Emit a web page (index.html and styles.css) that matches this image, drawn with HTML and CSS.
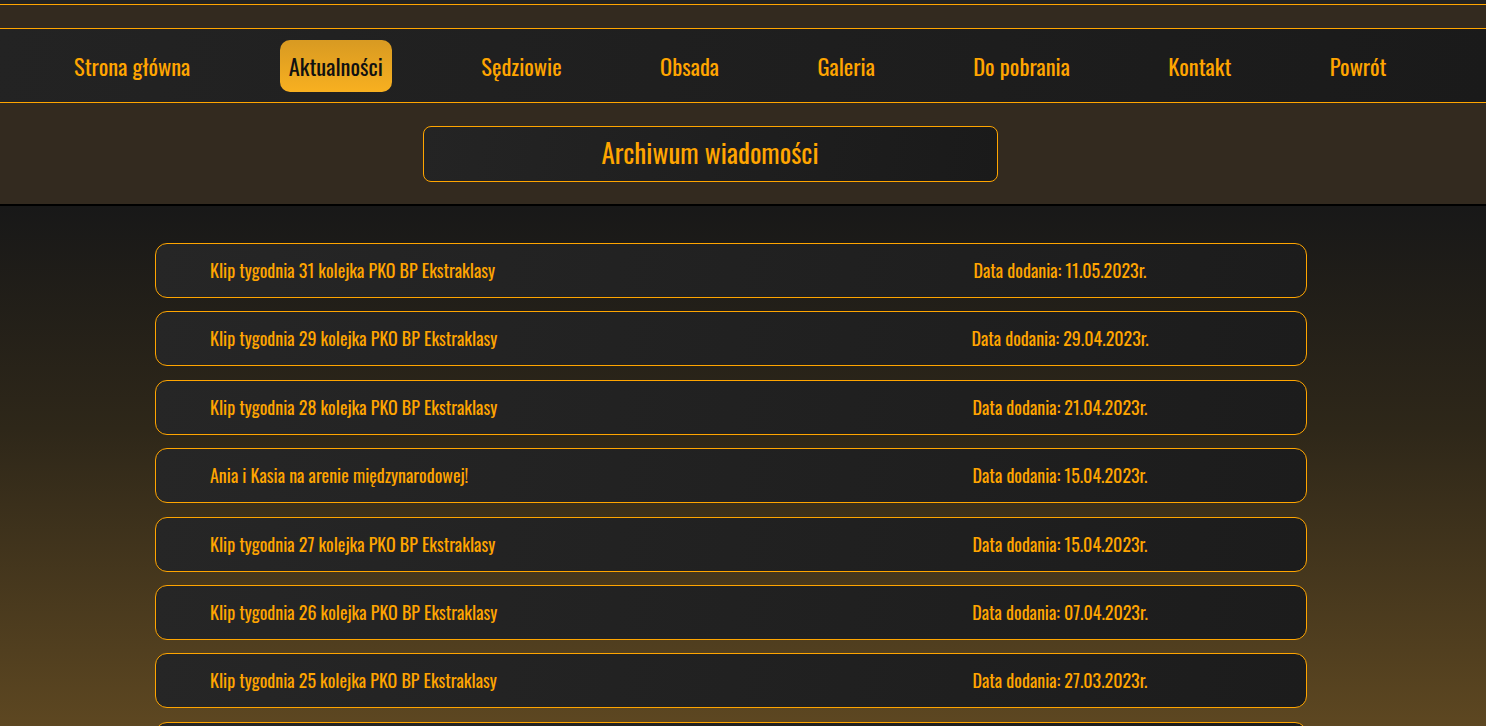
FILE: index.html
```html
<!DOCTYPE html>
<html lang="pl">
<head>
<meta charset="utf-8">
<title>Archiwum wiadomości</title>
<link rel="stylesheet" href="styles.css">
</head>
<body>
<div class="topbar"></div>
<div class="band-top"></div>
<nav class="nav">
  <a class="nav-link" href="#">Strona główna</a>
  <a class="nav-link active" href="#">Aktualności</a>
  <a class="nav-link" href="#">Sędziowie</a>
  <a class="nav-link" href="#">Obsada</a>
  <a class="nav-link" href="#">Galeria</a>
  <a class="nav-link" href="#">Do pobrania</a>
  <a class="nav-link" href="#">Kontakt</a>
  <a class="nav-link" href="#">Powrót</a>
</nav>
<header class="title-band">
  <h1 class="title-box">Archiwum wiadomości</h1>
</header>
<main class="content">
  <ul class="news-list">
    <li class="news-row"><span class="news-title">Klip tygodnia 31 kolejka PKO BP Ekstraklasy</span><span class="news-date">Data dodania: 11.05.2023r.</span></li>
    <li class="news-row"><span class="news-title">Klip tygodnia 29 kolejka PKO BP Ekstraklasy</span><span class="news-date">Data dodania: 29.04.2023r.</span></li>
    <li class="news-row"><span class="news-title">Klip tygodnia 28 kolejka PKO BP Ekstraklasy</span><span class="news-date">Data dodania: 21.04.2023r.</span></li>
    <li class="news-row"><span class="news-title">Ania i Kasia na arenie międzynarodowej!</span><span class="news-date">Data dodania: 15.04.2023r.</span></li>
    <li class="news-row"><span class="news-title">Klip tygodnia 27 kolejka PKO BP Ekstraklasy</span><span class="news-date">Data dodania: 15.04.2023r.</span></li>
    <li class="news-row"><span class="news-title">Klip tygodnia 26 kolejka PKO BP Ekstraklasy</span><span class="news-date">Data dodania: 07.04.2023r.</span></li>
    <li class="news-row"><span class="news-title">Klip tygodnia 25 kolejka PKO BP Ekstraklasy</span><span class="news-date">Data dodania: 27.03.2023r.</span></li>
    <li class="news-row"><span class="news-title">Klip tygodnia 24 kolejka PKO BP Ekstraklasy</span><span class="news-date">Data dodania: 17.03.2023r.</span></li>
  </ul>
</main>
</body>
</html>
```
FILE: styles.css
```css
html, body {
  margin: 0;
  padding: 0;
}
body {
  background: #191919;
  font-family: "Oswald", "Liberation Sans Narrow", "DejaVu Sans Condensed", "Liberation Sans", sans-serif;
  color: #ffa500;
  overflow: hidden;
}
.topbar {
  height: 4px;
  background: #222;
  border-bottom: 1px solid #ffa500;
}
.band-top {
  height: 23px;
  background: #332a1f;
  border-bottom: 1px solid #ffa500;
}
.nav {
  height: 73px;
  display: flex;
  align-items: center;
  gap: 80.4px;
  padding-left: 65px;
  background: linear-gradient(100deg, #232323, #1a1a1a);
  border-bottom: 1px solid #ffa500;
}
.nav-link {
  color: #ffa500;
  text-decoration: none;
  font-size: 22.5px;
  line-height: 52px;
  padding: 0 9px;
  border-radius: 10px;
  margin-top: 1px;
}
.nav-link.active {
  color: #111;
  background: linear-gradient(180deg, #d89a22, #f8b020);
}
.title-band {
  height: 101px;
  background: #332a1f;
  border-bottom: 2px solid #000;
  display: flex;
  justify-content: center;
  align-items: flex-start;
  padding-right: 66px;
}
.title-box {
  margin: 23px 0 0 0;
  width: 573px;
  height: 54px;
  border: 1px solid #ffa500;
  border-radius: 8px;
  background: linear-gradient(100deg, #242424, #1a1a1a);
  font-size: 27px;
  font-weight: normal;
  text-align: center;
  line-height: 50px;
  color: #ffa500;
}
.content {
  height: 520px;
  background: linear-gradient(180deg, #181818 0%, #2e2719 40%, #634b22 100%);
  padding-top: 37px;
}
.news-list {
  list-style: none;
  margin: 0 0 0 155px;
  padding: 0;
  width: 1152px;
  display: flex;
  flex-direction: column;
  gap: 13.4px;
}
.news-row {
  box-sizing: border-box;
  height: 55px;
  flex: none;
  border: 1px solid #ffa500;
  border-radius: 12px;
  background: linear-gradient(100deg, #262626, #1c1c1c);
  display: flex;
  align-items: center;
  padding-left: 54px;
  padding-bottom: 1px;
  font-size: 18px;
}
.news-title {
  flex: 1;
}
.news-date {
  width: 300px;
  text-align: center;
  margin-right: 96px;
}
```
